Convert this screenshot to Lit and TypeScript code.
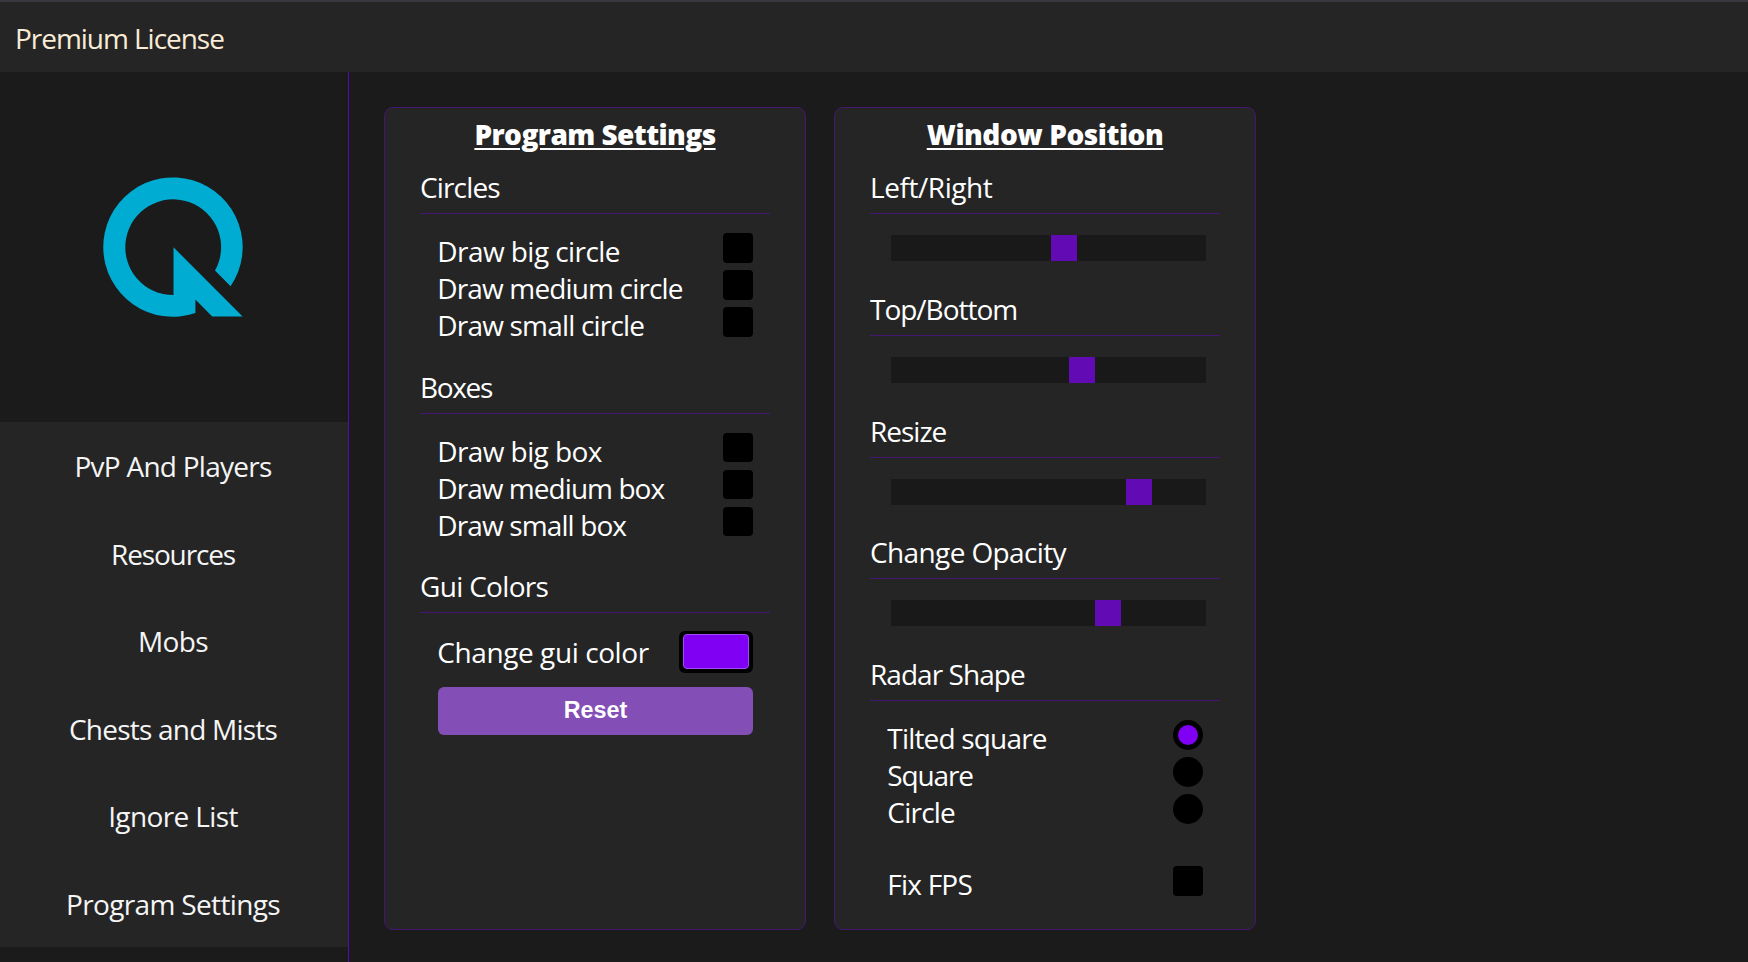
import { LitElement, html, css, svg } from "lit";
import { customElement } from "lit/decorators.js";
import { styleMap } from "lit/directives/style-map.js";

type Label = { text: string; track: number };
const label = (text: string, track: number): Label => ({ text, track });

@customElement("app-root")
export class AppRoot extends LitElement {
  static styles = css`
    :host { display: block; height: 962px; overflow: hidden; background: #1b1b1b; color: #fff;
      font-family: "Open Sans", "Noto Sans", sans-serif; font-size: 28px; line-height: 37px; }
    * { box-sizing: border-box; }
    .page { display: flex; flex-direction: column; height: 100%; }
    .top { height: 72px; flex: none; background: #252525; border-top: 2px solid #38383e; padding: 18px 0 0 15px; color: #faebd7; }
    .body { display: flex; flex: 1; min-height: 0; }
    .side { width: 349px; border-right: 1px solid #5c07b0; flex: none; }
    .brand { height: 350px; padding: 103px 0 0 101px; }
    .brand svg { display: block; }
    .nav { background: #252525; height: 525px; display: flex; flex-direction: column; color: #f5f5f5; }
    .item { height: 87.5px; display: flex; align-items: center; justify-content: center; padding: 2px 2px 0 0; }
    .main { display: flex; gap: 28px; padding: 35px 0 0 35px; }
    .card { width: 422px; height: 823px; background: #252525; border: 1px solid #451672; border-radius: 9px; padding: 8px 35px 0; }
    .title { text-align: center; font-weight: 800; text-decoration: underline; text-decoration-thickness: 2px; text-underline-offset: 3px; margin-bottom: 15px; height: 37px; }
    .group { height: 199.6px; }
    .axis { height: 121.75px; }
    .head { border-bottom: 1px solid #451672; height: 46px; padding-top: 1px; }
    .rows { padding: 19px 17px 0 18px; }
    .rows.tight { padding-top: 18px; }
    .row { display: flex; justify-content: space-between; height: 37px; }
    .row span, .cap span { margin-left: -0.7px; }
    .box { width: 30px; height: 29.8px; border-radius: 4px; background: #000; }
    .radio { width: 30px; height: 30px; border-radius: 50%; background: #000; display: flex; align-items: center; justify-content: center; }
    .dot { width: 20px; height: 20px; border-radius: 50%; background: #7f00f2; }
    .color { width: 74px; height: 42px; background: #000; border-radius: 6px; padding: 3px 4px 4px; }
    .swatch { height: 35px; background: #7f00f2; border: 1px solid #a04df5; border-radius: 4px; }
    .colorrow { display: flex; justify-content: space-between; height: 56px; }
    .colorrow .cap { padding-top: 3px; }
    .reset { height: 48px; border-radius: 6px; background: #834eb5; font: bold 23.3px/46px "Liberation Sans", Arial, sans-serif; text-align: center; }
    .track { margin: 21px 14px 0 21px; height: 26px; background: #191919; }
    .thumb { width: 26px; height: 100%; background: #620bb5; }
    .fps { margin-top: 35px; }
  `;

  private label(l: Label) {
    return html`<span style=${styleMap({ letterSpacing: `${l.track}px` })}>${l.text}</span>`;
  }

  private head(l: Label) {
    return html`<div class="head">${this.label(l)}</div>`;
  }

  private checks(title: Label, labels: Label[]) {
    return html`<section class="group">
      ${this.head(title)}
      <div class="rows">
        ${labels.map((l) => html`<div class="row">${this.label(l)}<div class="box"></div></div>`)}
      </div>
    </section>`;
  }

  private slider(l: Label, offset: number) {
    return html`<section class="axis">
      ${this.head(l)}
      <div class="track"><div class="thumb" style=${styleMap({ marginLeft: `${offset}px` })}></div></div>
    </section>`;
  }

  render() {
    const nav = [
      label("PvP And Players", -0.75),
      label("Resources", -1.15),
      label("Mobs", -0.66),
      label("Chests and Mists", -0.78),
      label("Ignore List", -0.62),
      label("Program Settings", -0.65),
    ];
    const shapes = [label("Tilted square", -0.82), label("Square", -1.15), label("Circle", -0.77)];
    return html`<div class="page">
      <header class="top"><div>${this.label(label("Premium License", -1.04))}</div></header>
      <div class="body">
        <aside class="side">
          <div class="brand">
            <svg width="145" height="145" viewBox="100.6 174.9 145 145" fill="#00acd2">
              ${svg`<path d="M230.2 286.2 A69.7 69.7 0 1 0 195 313 V299.3 L211.8 316.3 H242.2 L173.1 247.2 V295 A47.9 47.9 0 1 1 214.6 270.5 Z"></path>`}
            </svg>
          </div>
          <nav class="nav">${nav.map((l) => html`<div class="item">${this.label(l)}</div>`)}</nav>
        </aside>
        <main class="main">
          <div class="card">
            <div class="title">${this.label(label("Program Settings", -0.55))}</div>
            ${this.checks(label("Circles", -0.85), [label("Draw big circle", -0.56), label("Draw medium circle", -0.85), label("Draw small circle", -0.81)])}
            ${this.checks(label("Boxes", -1.35), [label("Draw big box", -0.6), label("Draw medium box", -0.95), label("Draw small box", -0.88)])}
            <section>
              ${this.head(label("Gui Colors", -0.68))}
              <div class="rows tight">
                <div class="colorrow"><div class="cap">${this.label(label("Change gui color", -0.42))}</div><div class="color"><div class="swatch"></div></div></div>
                <div class="reset">Reset</div>
              </div>
            </section>
          </div>
          <div class="card">
            <div class="title">${this.label(label("Window Position", -0.45))}</div>
            ${this.slider(label("Left/Right", -0.44), 160)}
            ${this.slider(label("Top/Bottom", -1.02), 178)}
            ${this.slider(label("Resize", -1), 235)}
            ${this.slider(label("Change Opacity", -0.62), 204)}
            <section>
              ${this.head(label("Radar Shape", -0.95))}
              <div class="rows">
                ${shapes.map((l, i) => html`<div class="row">${this.label(l)}<div class="radio">${i === 0 ? html`<div class="dot"></div>` : ""}</div></div>`)}
                <div class="row fps">${this.label(label("Fix FPS", -0.77))}<div class="box"></div></div>
              </div>
            </section>
          </div>
        </main>
      </div>
    </div>`;
  }
}
